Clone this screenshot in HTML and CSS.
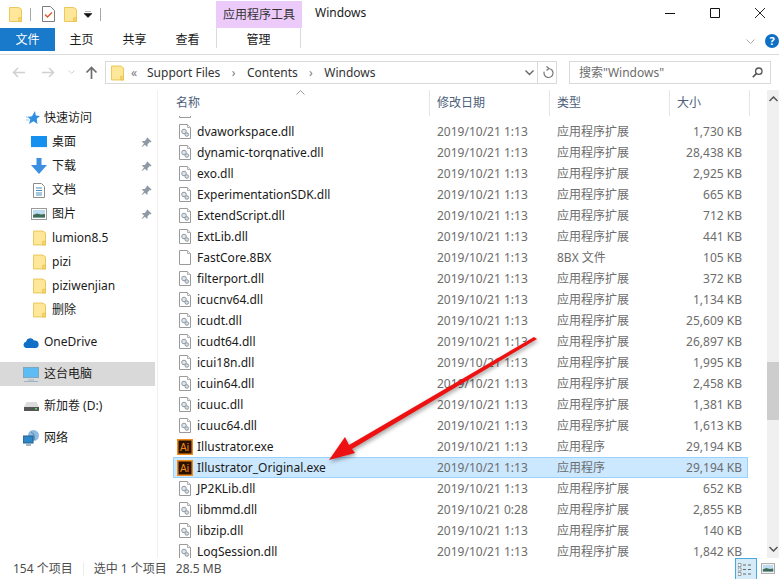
FILE: index.html
```html
<!DOCTYPE html>
<html lang="zh-CN">
<head>
  <meta charset="UTF-8">
  <title>Windows</title>
  <link rel="stylesheet" href="styles.css">
</head>
<body>

<!-- Shared icons -->
<svg class="defs" width="0" height="0">
  <symbol id="folder" viewBox="0 0 14 16">
    <path d="M.5.5h10l3 2v13H.5z" fill="#ffe79a" stroke="#e8c24f"/>
    <path d="M10.5 15.5v-4h3v4z" fill="#f8d775" stroke="#e8c24f"/>
  </symbol>
  <symbol id="dll" viewBox="0 0 12 15">
    <path d="M.5.5h8l3 3v11H.5z" fill="#fff" stroke="#9a9a9a"/>
    <path d="M8.500.5v3h3" fill="#eee" stroke="#b0b0b0"/>
    <circle cx="5" cy="7.500" r="2.300" fill="#dfe4e9" stroke="#8e9aa5"/>
    <circle cx="7.800" cy="10.500" r="1.800" fill="#d5dce2" stroke="#8e9aa5"/>
  </symbol>
  <symbol id="blank" viewBox="0 0 12 15">
    <path d="M.5.5h8l3 3v11H.5z" fill="#fff" stroke="#9a9a9a"/>
    <path d="M8.500.5v3h3" fill="#f3f3f3" stroke="#b0b0b0"/>
  </symbol>
  <symbol id="pin" viewBox="0 0 12 12">
    <path d="M7 .5l4.500 4.500-1 .8-1-.3-2.300 2.300v2l-.9.9-2-2.300L1 11l-.4-.4 2.700-3.400-2.200-2 .9-.9h2l2.300-2.300-.3-1z" fill="#8d99a5"/>
  </symbol>
  <symbol id="picture" viewBox="0 0 16 12">
    <rect x=".5" y=".5" width="15" height="11" fill="#fff" stroke="#9a9a9a"/>
    <rect x="2" y="2" width="12" height="8" fill="#bcdcf0"/>
    <path d="M2 7l4-1.500 4 1 4-.5v3.500H2z" fill="#3f6b55"/>
  </symbol>
</svg>

<header class="title-bar">
  <svg width="13" height="15"><use href="#folder"/></svg>
  <span class="qa-sep"></span>
  <svg class="qa-doc" width="13" height="16" viewBox="0 0 13 16">
    <path d="M.5.5h8l4 4v11H.5z" fill="#fff" stroke="#7c7c7c"/>
    <path d="M3 8.500l2.500 2.500L10 6.500" fill="none" stroke="#e2572b" stroke-width="1.400"/>
  </svg>
  <svg class="qa-folder2" width="13" height="15"><use href="#folder"/></svg>
  <svg class="qa-drop" width="8" height="7" viewBox="0 0 8 7">
    <path d="M1 0h6M0 2.500h8L4 6.500z" fill="#111" stroke="#111" stroke-width=".6"/>
  </svg>
  <span class="qa-sep"></span>
  <div class="tool-title">应用程序工具</div>
  <div class="win-title">Windows</div>
  <div class="win-buttons">
    <svg width="10" height="10" viewBox="0 0 10 10"><path d="M0 5.500h10" stroke="#111"/></svg>
    <svg width="10" height="10" viewBox="0 0 10 10"><path d="M.5.500h9v9h-9z" fill="none" stroke="#111"/></svg>
    <svg width="10" height="10" viewBox="0 0 10 10"><path d="M0 0l10 10M10 0L0 10" stroke="#111" stroke-width=".9"/></svg>
  </div>
</header>

<nav class="tab-bar">
  <div class="tab tab-file">文件</div>
  <div class="tab tab-plain">主页</div>
  <div class="tab tab-plain">共享</div>
  <div class="tab tab-plain">查看</div>
  <div class="tab tab-manage">管理</div>
  <svg class="ribbon-toggle" width="9" height="6" viewBox="0 0 9 6"><path d="M.5.500l4 4 4-4" fill="none" stroke="#a9a9a9"/></svg>
  <div class="help">?</div>
</nav>

<section class="nav-bar">
  <svg class="nav-back" width="13" height="11" viewBox="0 0 13 11"><path d="M13 5.500H1.500M6 1L1.500 5.500 6 10" fill="none" stroke="#d0d0d0" stroke-width="1.500"/></svg>
  <svg class="nav-forward" width="13" height="11" viewBox="0 0 13 11"><path d="M0 5.500h11.500M7 1l4.500 4.500L7 10" fill="none" stroke="#d0d0d0" stroke-width="1.500"/></svg>
  <svg class="nav-down" width="7" height="5" viewBox="0 0 7 5"><path d="M.5.500l3 3 3-3" fill="none" stroke="#d0d0d0"/></svg>
  <svg class="nav-up" width="13" height="13" viewBox="0 0 13 13"><path d="M6.500 13V2M1.500 6.500l5-5 5 5" fill="none" stroke="#6d6d6d" stroke-width="1.700"/></svg>
  <div class="address">
    <svg class="addr-folder" width="13" height="16"><use href="#folder"/></svg>
    <span class="addr-more">«</span>
    <span class="crumb">Support Files</span>
    <span class="crumb-sep">›</span>
    <span class="crumb">Contents</span>
    <span class="crumb-sep">›</span>
    <span class="crumb">Windows</span>
    <svg class="addr-drop" width="9" height="6" viewBox="0 0 9 6"><path d="M.5.500l4 4 4-4" fill="none" stroke="#666" stroke-width="1.400"/></svg>
    <svg class="addr-refresh" width="11" height="13" viewBox="0 0 11 13"><path d="M5.500 2.500a4.500 4.500 0 1 1-4.300 3.200M3.500.5l2.500 2-2.500 2" fill="none" stroke="#777" stroke-width="1.200"/></svg>
  </div>
  <div class="search">
    <span>搜索"Windows"</span>
    <svg width="11" height="11" viewBox="0 0 11 11"><circle cx="6.800" cy="4.200" r="3.200" fill="none" stroke="#555" stroke-width="1.300"/><path d="M4.500 6.500L.8 10.200" stroke="#555" stroke-width="1.700"/></svg>
  </div>
</section>

<main class="main">
  <aside class="sidebar">
    <div class="side-item side-quick">
      <svg width="14" height="14" viewBox="0 0 14 14"><path d="M9 0l.8 4.500 4.200.5-3.300 2.800.8 5.200-4-2.800L3 13l1.300-4.800L1.500 6l4.500-.8z" fill="#2f8fe0"/><path d="M0 6h3M0 9h3" stroke="#9ccbf0"/></svg>
      <span>快速访问</span>
    </div>
    <div class="side-item side-sub">
      <svg class="side-icon" width="16" height="12" viewBox="0 0 16 12"><rect width="16" height="12" fill="#1590ee"/><path d="M0 11h16v1H0z" fill="#e9f4fd"/></svg>
      <span>桌面</span>
      <svg class="pin" width="11" height="11"><use href="#pin"/></svg>
    </div>
    <div class="side-item side-sub">
      <svg class="side-icon" width="16" height="16" viewBox="0 0 16 16"><path d="M5.500 0h5v7H16l-8 9-8-9h5.500z" fill="#3c8fe0"/></svg>
      <span>下载</span>
      <svg class="pin" width="11" height="11"><use href="#pin"/></svg>
    </div>
    <div class="side-item side-sub">
      <svg class="side-icon" width="16" height="15" viewBox="0 0 16 15"><path d="M2.500.5h8l3 3v11h-11z" fill="#fff" stroke="#8c8c8c"/><path d="M5 5h6M5 7.500h6M5 10h6M5 12h6" stroke="#4f8fbf"/></svg>
      <span>文档</span>
      <svg class="pin" width="11" height="11"><use href="#pin"/></svg>
    </div>
    <div class="side-item side-sub">
      <svg class="side-icon" width="16" height="12"><use href="#picture"/></svg>
      <span>图片</span>
      <svg class="pin" width="11" height="11"><use href="#pin"/></svg>
    </div>
    <div class="side-item side-sub">
      <svg class="side-icon side-folder" width="13" height="16"><use href="#folder"/></svg>
      <span>lumion8.5</span>
    </div>
    <div class="side-item side-sub">
      <svg class="side-icon side-folder" width="13" height="16"><use href="#folder"/></svg>
      <span>pizi</span>
    </div>
    <div class="side-item side-sub">
      <svg class="side-icon side-folder" width="13" height="16"><use href="#folder"/></svg>
      <span>piziwenjian</span>
    </div>
    <div class="side-item side-sub">
      <svg class="side-icon side-folder" width="13" height="16"><use href="#folder"/></svg>
      <span>删除</span>
    </div>
    <div class="side-item side-drive">
      <svg width="16" height="11" viewBox="0 0 16 11"><path d="M3.500 11A3.200 3.200 0 0 1 3 4.700 4.300 4.300 0 0 1 11 3.500 3.800 3.800 0 0 1 12.500 11z" fill="#0f6fc6"/></svg>
      <span>OneDrive</span>
    </div>
    <div class="side-item side-pc">
      <svg width="16" height="15" viewBox="0 0 16 15"><rect x=".5" y=".5" width="15" height="10" fill="#5ebcf5" stroke="#7fa6bf"/><path d="M5 13h6M1 14.500h14" stroke="#9db4c4"/></svg>
      <span>这台电脑</span>
    </div>
    <div class="side-item side-disk">
      <svg width="15" height="9" viewBox="0 0 15 9"><path d="M2.500 0h10L15 5v4H0V5z" fill="#dcdcdc"/><rect y="5" width="15" height="4" fill="#555"/><rect x="11" y="6" width="2" height="1.500" fill="#4fe04f"/></svg>
      <span>新加卷 (D:)</span>
    </div>
    <div class="side-item side-network">
      <svg width="16" height="16" viewBox="0 0 16 16"><circle cx="10.500" cy="5.500" r="5.500" fill="#8fbbe0"/><path d="M8 2c2 1 4 3 3 8" stroke="#3d7fb8" fill="none"/><rect y="6" width="10" height="7" fill="#2c86c7" stroke="#255f8c"/><path d="M3 15h5" stroke="#7f9fb5" stroke-width="1.500"/></svg>
      <span>网络</span>
    </div>
  </aside>

  <section class="files">
    <div class="col-head">
      <svg class="sort-arrow" width="9" height="5" viewBox="0 0 9 5"><path d="M.5 4.500l4-4 4 4" fill="none" stroke="#9a9a9a"/></svg>
      <div class="col col-name">名称</div>
      <div class="col col-date">修改日期</div>
      <div class="col col-type">类型</div>
      <div class="col col-size">大小</div>
    </div>
    <div class="rows">
      <div class="row row-clipped"><svg class="file-icon" width="12" height="15"><use href="#dll"/></svg></div>
      <div class="row"><svg class="file-icon" width="12" height="15"><use href="#dll"/></svg><span class="name">dvaworkspace.dll</span><span class="date">2019/10/21 1:13</span><span class="type">应用程序扩展</span><span class="size">1,730 KB</span></div>
      <div class="row"><svg class="file-icon" width="12" height="15"><use href="#dll"/></svg><span class="name">dynamic-torqnative.dll</span><span class="date">2019/10/21 1:13</span><span class="type">应用程序扩展</span><span class="size">28,438 KB</span></div>
      <div class="row"><svg class="file-icon" width="12" height="15"><use href="#dll"/></svg><span class="name">exo.dll</span><span class="date">2019/10/21 1:13</span><span class="type">应用程序扩展</span><span class="size">2,925 KB</span></div>
      <div class="row"><svg class="file-icon" width="12" height="15"><use href="#dll"/></svg><span class="name">ExperimentationSDK.dll</span><span class="date">2019/10/21 1:13</span><span class="type">应用程序扩展</span><span class="size">665 KB</span></div>
      <div class="row"><svg class="file-icon" width="12" height="15"><use href="#dll"/></svg><span class="name">ExtendScript.dll</span><span class="date">2019/10/21 1:13</span><span class="type">应用程序扩展</span><span class="size">712 KB</span></div>
      <div class="row"><svg class="file-icon" width="12" height="15"><use href="#dll"/></svg><span class="name">ExtLib.dll</span><span class="date">2019/10/21 1:13</span><span class="type">应用程序扩展</span><span class="size">441 KB</span></div>
      <div class="row"><svg class="file-icon" width="12" height="15"><use href="#blank"/></svg><span class="name">FastCore.8BX</span><span class="date">2019/10/21 1:13</span><span class="type">8BX 文件</span><span class="size">105 KB</span></div>
      <div class="row"><svg class="file-icon" width="12" height="15"><use href="#dll"/></svg><span class="name">filterport.dll</span><span class="date">2019/10/21 1:13</span><span class="type">应用程序扩展</span><span class="size">372 KB</span></div>
      <div class="row"><svg class="file-icon" width="12" height="15"><use href="#dll"/></svg><span class="name">icucnv64.dll</span><span class="date">2019/10/21 1:13</span><span class="type">应用程序扩展</span><span class="size">1,134 KB</span></div>
      <div class="row"><svg class="file-icon" width="12" height="15"><use href="#dll"/></svg><span class="name">icudt.dll</span><span class="date">2019/10/21 1:13</span><span class="type">应用程序扩展</span><span class="size">25,609 KB</span></div>
      <div class="row"><svg class="file-icon" width="12" height="15"><use href="#dll"/></svg><span class="name">icudt64.dll</span><span class="date">2019/10/21 1:13</span><span class="type">应用程序扩展</span><span class="size">26,897 KB</span></div>
      <div class="row"><svg class="file-icon" width="12" height="15"><use href="#dll"/></svg><span class="name">icui18n.dll</span><span class="date">2019/10/21 1:13</span><span class="type">应用程序扩展</span><span class="size">1,995 KB</span></div>
      <div class="row"><svg class="file-icon" width="12" height="15"><use href="#dll"/></svg><span class="name">icuin64.dll</span><span class="date">2019/10/21 1:13</span><span class="type">应用程序扩展</span><span class="size">2,458 KB</span></div>
      <div class="row"><svg class="file-icon" width="12" height="15"><use href="#dll"/></svg><span class="name">icuuc.dll</span><span class="date">2019/10/21 1:13</span><span class="type">应用程序扩展</span><span class="size">1,381 KB</span></div>
      <div class="row"><svg class="file-icon" width="12" height="15"><use href="#dll"/></svg><span class="name">icuuc64.dll</span><span class="date">2019/10/21 1:13</span><span class="type">应用程序扩展</span><span class="size">1,613 KB</span></div>
      <div class="row"><svg class="ai-icon" width="16" height="16" viewBox="0 0 16 16"><rect x=".75" y=".75" width="14.500" height="14.500" fill="#2b1200" stroke="#f08a1d" stroke-width="1.500"/><text x="3" y="12" class="ai-text">Ai</text></svg><span class="name">Illustrator.exe</span><span class="date">2019/10/21 1:13</span><span class="type">应用程序</span><span class="size">29,194 KB</span></div>
      <div class="row row-selected"><svg class="ai-icon" width="16" height="16" viewBox="0 0 16 16"><rect x=".75" y=".75" width="14.500" height="14.500" fill="#2b1200" stroke="#f08a1d" stroke-width="1.500"/><text x="3" y="12" class="ai-text">Ai</text></svg><span class="name">Illustrator_Original.exe</span><span class="date">2019/10/21 1:13</span><span class="type">应用程序</span><span class="size">29,194 KB</span></div>
      <div class="row"><svg class="file-icon" width="12" height="15"><use href="#dll"/></svg><span class="name">JP2KLib.dll</span><span class="date">2019/10/21 1:13</span><span class="type">应用程序扩展</span><span class="size">652 KB</span></div>
      <div class="row"><svg class="file-icon" width="12" height="15"><use href="#dll"/></svg><span class="name">libmmd.dll</span><span class="date">2019/10/21 0:28</span><span class="type">应用程序扩展</span><span class="size">2,855 KB</span></div>
      <div class="row"><svg class="file-icon" width="12" height="15"><use href="#dll"/></svg><span class="name">libzip.dll</span><span class="date">2019/10/21 1:13</span><span class="type">应用程序扩展</span><span class="size">140 KB</span></div>
      <div class="row"><svg class="file-icon" width="12" height="15"><use href="#dll"/></svg><span class="name">LogSession.dll</span><span class="date">2019/10/21 1:13</span><span class="type">应用程序扩展</span><span class="size">1,842 KB</span></div>
    </div>
  </section>

  <div class="scrollbar">
    <svg width="9" height="6" viewBox="0 0 9 6"><path d="M.5 5l4-4 4 4" fill="none" stroke="#555" stroke-width="1.500"/></svg>
    <div class="scroll-thumb"></div>
    <svg width="9" height="6" viewBox="0 0 9 6"><path d="M.5 1l4 4 4-4" fill="none" stroke="#555" stroke-width="1.500"/></svg>
  </div>
</main>

<footer class="status">
  <span class="status-count">154 个项目</span>
  <span class="status-sep"></span>
  <span>选中 1 个项目</span>
  <span class="status-size">28.5 MB</span>
  <div class="view-buttons">
    <div class="view-btn view-btn-on">
      <svg width="16" height="13" viewBox="0 0 16 13"><path d="M0 .5h3v3H0zM0 5h3v3H0zM0 9.500h3v3H0z" fill="#fff" stroke="#777" stroke-width=".7"/><path d="M5 2h3M10 2h3M5 6.500h3M10 6.500h3M5 11h3M10 11h3" stroke="#666"/></svg>
    </div>
    <div class="view-btn">
      <svg width="14" height="11"><use href="#picture"/></svg>
    </div>
  </div>
</footer>

<!-- Red annotation arrow drawn over the window -->
<svg class="annotation" width="779" height="579" viewBox="0 0 779 579">
  <polygon points="329,460 345,437 349,445 534,337 537,339 352,449 355,453" fill="#ee1111"/>
</svg>

</body>
</html>
```

FILE: styles.css
```css
* {
  margin: 0;
  padding: 0;
  box-sizing: border-box;
}
html, body {
  height: 100%;
}
body {
  position: relative;
  display: flex;
  flex-direction: column;
  height: 579px;
  overflow: hidden;
  background: #ffffff;
  color: #1a1a1a;
  font-family: "Noto Sans", "Noto Sans CJK SC", sans-serif;
  font-size: 12px;
  line-height: 16px;
}
svg {
  display: block;
  flex: none;
}
.defs {
  position: absolute;
}

/* Title bar */
.title-bar {
  display: flex;
  align-items: center;
  height: 28px;
  flex: none;
  padding-left: 9px;
}
.qa-sep {
  width: 1px;
  height: 13px;
  margin-left: 8px;
  background: #a8a8a8;
}
.qa-doc {
  margin-left: 11px;
}
.qa-folder2 {
  margin-left: 9px;
}
.qa-drop {
  margin-left: 7px;
}
.tool-title {
  align-self: flex-end;
  width: 86px;
  height: 27px;
  margin-left: 115px;
  background: #eccbfb;
  text-align: center;
  line-height: 28px;
  color: #333;
}
.win-title {
  margin-left: 13px;
  margin-top: -2px;
}
.win-buttons {
  display: flex;
  gap: 35px;
  margin-left: auto;
  margin-right: 14px;
  margin-top: -3px;
}

/* Ribbon tabs */
.tab-bar {
  display: flex;
  align-items: flex-start;
  height: 27px;
  flex: none;
  border-bottom: 1px solid #dadada;
}
.tab {
  height: 23px;
  text-align: center;
  line-height: 24px;
}
.tab-file {
  width: 55px;
  background: #1979ca;
  color: #ffffff;
}
.tab-plain {
  width: 53px;
}
.tab-manage {
  width: 85px;
  height: 20px;
  margin-left: 2px;
  border-left: 1px solid #dadada;
  border-right: 1px solid #dadada;
}
.ribbon-toggle {
  margin-left: auto;
  margin-top: 11px;
  margin-right: 10px;
}
.help {
  width: 14px;
  height: 14px;
  margin-top: 6px;
  border-radius: 50%;
  background: #0f6fc6;
  color: #ffffff;
  font-size: 11px;
  font-weight: bold;
  line-height: 14px;
  text-align: center;
}

/* Address row */
.nav-bar {
  display: flex;
  align-items: center;
  height: 35px;
  flex: none;
  padding-left: 12px;
}
.nav-forward {
  margin-left: 17px;
}
.nav-down {
  margin-left: 13px;
}
.nav-up {
  margin-left: 10px;
}
.address {
  display: flex;
  align-items: center;
  width: 452px;
  height: 23px;
  margin-left: 7px;
  padding-left: 5px;
  border: 1px solid #d9d9d9;
  color: #333;
}
.addr-more {
  margin-left: 7px;
  width: 16px;
  color: #777;
}
.crumb-sep {
  width: 26.5px;
  text-align: center;
  color: #777;
}
.addr-drop {
  margin-left: auto;
}
.addr-refresh {
  box-sizing: content-box;
  margin-left: 3px;
  padding: 4px 2px 4px 5px;
  border-left: 1px solid #d9d9d9;
}
.search {
  display: flex;
  align-items: center;
  justify-content: space-between;
  width: 202px;
  height: 23px;
  margin-left: 12px;
  padding: 0 7px 0 9px;
  border: 1px solid #d9d9d9;
  color: #6d6d6d;
}

/* Main area */
.main {
  display: flex;
  flex: 1;
  min-height: 0;
}
.sidebar {
  width: 158px;
  flex: none;
  padding-top: 16px;
  border-right: 1px solid #f0f0f0;
  overflow: hidden;
}
.side-item {
  position: relative;
  display: flex;
  align-items: center;
  height: 24px;
  color: #1a1a1a;
}
.side-quick {
  padding-left: 26px;
  gap: 4px;
}
.side-sub {
  padding-left: 31px;
}
.side-icon {
  margin-right: 5px;
}
.side-folder {
  margin-left: 2px;
  margin-right: 6px;
}
.pin {
  margin-left: auto;
  margin-right: 5px;
}
.side-drive {
  margin-top: 8px;
  padding-left: 23px;
  gap: 5px;
}
.side-pc {
  width: 155px;
  margin-top: 8px;
  padding-left: 23px;
  gap: 5px;
  background: #d9d9d9;
}
.side-disk {
  margin-top: 8px;
  padding-left: 24px;
  gap: 5px;
}
.side-network {
  margin-top: 8px;
  padding-left: 23px;
  gap: 5px;
}

/* File list */
.files {
  position: relative;
  display: flex;
  flex-direction: column;
  flex: 1;
  min-width: 0;
}
.col-head {
  display: flex;
  height: 26px;
  flex: none;
  padding-left: 13px;
  color: #4c607a;
}
.col {
  height: 26px;
  padding-left: 5px;
  line-height: 26px;
  border-right: 1px solid #e5e5e5;
}
.col-name {
  width: 260px;
  padding-left: 6px;
  margin-left: -1px;
}
.col-date {
  width: 120px;
  padding-left: 7px;
}
.col-type {
  width: 120px;
  padding-left: 7px;
}
.col-size {
  width: 80px;
  padding-left: 7px;
}
.sort-arrow {
  position: absolute;
  left: 138px;
  top: 0;
}
.rows {
  flex: 1;
  min-height: 0;
  padding-left: 15px;
  overflow: hidden;
}
.row {
  display: flex;
  align-items: center;
  width: 575px;
  height: 21px;
  border: 1px solid transparent;
  white-space: nowrap;
}
.row-clipped {
  margin-top: -16px;
}
.row-selected {
  background: #cce8ff;
  border-color: #99d1ff;
}
.file-icon {
  margin-left: 5px;
  margin-right: 6px;
}
.ai-icon {
  margin-left: 3px;
  margin-right: 4px;
}
.ai-text {
  font-family: "Liberation Sans", sans-serif;
  font-size: 10px;
  fill: #f08a1d;
}
.name {
  width: 240px;
}
.date {
  width: 120px;
  color: #6d6d6d;
}
.type {
  width: 100px;
  color: #6d6d6d;
}
.size {
  width: 85px;
  text-align: right;
  color: #6d6d6d;
}

/* Scrollbar */
.scrollbar {
  display: flex;
  flex-direction: column;
  align-items: center;
  justify-content: space-between;
  width: 12px;
  flex: none;
  padding: 6px 0;
  background: #f0f0f0;
  position: relative;
}
.scroll-thumb {
  position: absolute;
  top: 272px;
  left: 0;
  width: 12px;
  height: 58px;
  background: #cdcdcd;
}

/* Status bar */
.status {
  display: flex;
  align-items: center;
  height: 21px;
  flex: none;
  padding-left: 13px;
  color: #4d4d4d;
}
.status-sep {
  width: 1px;
  height: 14px;
  margin: 0 10px;
  background: #ececec;
}
.status-size {
  margin-left: 9px;
}
.view-buttons {
  display: flex;
  margin-left: auto;
}
.view-btn {
  display: flex;
  align-items: center;
  justify-content: center;
  width: 22px;
  height: 21px;
}
.view-btn-on {
  background: #d5ebf8;
  border: 1px solid #4aa8dc;
  border-bottom: 0;
}

/* Annotation */
.annotation {
  position: absolute;
  left: 0;
  top: 0;
  pointer-events: none;
  filter: drop-shadow(1px 2px 2px rgba(0, 0, 0, 0.4));
}
```
